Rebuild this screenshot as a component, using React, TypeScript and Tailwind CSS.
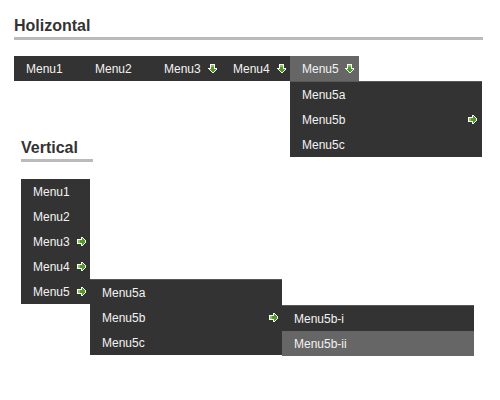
import React from "react";

function Arrow({ right = false }: { right?: boolean }) {
  return (
    <svg
      width="9"
      height="9"
      viewBox="0 0 9 9"
      className={right ? "-rotate-90 shrink-0" : "shrink-0"}
      shapeRendering="crispEdges"
    >
      <path d="M2 0H7V4H9V5L5 9H4L0 5V4H2Z" fill="#ffffff" />
      <path d="M3 1H6V5H8L5 8H4L1 5H3Z" fill="#4f9a23" />
      <path d="M3 1H6V3H3Z" fill="#86c455" />
    </svg>
  );
}

function HItem({ label, arrow, active }: { label: string; arrow?: boolean; active?: boolean }) {
  return (
    <div
      className={
        active
          ? "w-[69px] h-[25px] flex items-center justify-between pl-[12px] pr-[5px] bg-[#666666]"
          : "w-[69px] h-[25px] flex items-center justify-between pl-[12px] pr-[4px]"
      }
    >
      <span>{label}</span>
      {arrow ? <Arrow /> : null}
    </div>
  );
}

function SubItem({ label, arrow, active, pr }: { label: string; arrow?: boolean; active?: boolean; pr?: string }) {
  return (
    <div
      className={
        (active ? "bg-[#666666] " : "") +
        "h-[25px] flex items-center justify-between pl-[12px] " +
        (pr === "5" ? "pr-[5px]" : "pr-[4px]")
      }
    >
      <span>{label}</span>
      {arrow ? <Arrow right /> : null}
    </div>
  );
}

export default function App() {
  return (
    <div
      className="w-[500px] h-[400px] bg-white relative overflow-hidden text-[12px] text-[#f2f2f2]"
      style={{ fontFamily: '"Liberation Sans", Arial, sans-serif' }}
    >
      {/* Horizontal */}
      <div className="pl-[14px] pt-[16px]">
        <div className="w-[469px] text-[16px] leading-5 font-bold text-[#333333] pb-[1px] border-b-[3px] border-[#bbbbbb]">
          Holizontal
        </div>
        <div className="mt-[16px] w-[345px] h-[25px] bg-[#333333] flex">
          <HItem label="Menu1" />
          <HItem label="Menu2" />
          <HItem label="Menu3" arrow />
          <HItem label="Menu4" arrow />
          <div className="relative">
            <HItem label="Menu5" arrow active />
            <div className="absolute left-0 top-[25px] w-[192px] bg-[#333333] border-t border-[#585858] z-10">
              <SubItem label="Menu5a" />
              <SubItem label="Menu5b" arrow pr="5" />
              <SubItem label="Menu5c" />
            </div>
          </div>
        </div>
      </div>

      {/* Vertical */}
      <div className="pl-[21px] mt-[57px]">
        <div className="w-[72px] text-[16px] leading-5 font-bold text-[#333333] pb-[1px] border-b-[3px] border-[#bbbbbb]">
          Vertical
        </div>
        <div className="mt-[17px] w-[69px] bg-[#333333]">
          <SubItem label="Menu1" />
          <SubItem label="Menu2" />
          <SubItem label="Menu3" arrow />
          <SubItem label="Menu4" arrow />
          <div className="relative">
            <SubItem label="Menu5" arrow />
            <div className="absolute left-[69px] top-0 w-[192px] bg-[#333333] border-t border-[#585858]">
              <SubItem label="Menu5a" />
              <div className="relative">
                <SubItem label="Menu5b" arrow />
                <div className="absolute left-[192px] top-0 w-[192px] bg-[#333333] border-t border-[#585858]">
                  <SubItem label="Menu5b-i" />
                  <SubItem label="Menu5b-ii" active />
                </div>
              </div>
              <SubItem label="Menu5c" />
            </div>
          </div>
        </div>
      </div>
    </div>
  );
}
